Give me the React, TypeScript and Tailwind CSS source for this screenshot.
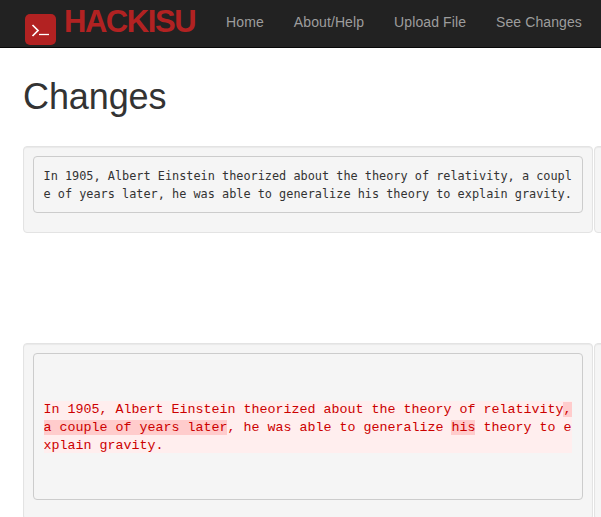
const links = ["Home", "About/Help", "Upload File", "See Changes"];

function Logo() {
  return (
    <svg width="31" height="31" viewBox="0 0 31 31" className="shrink-0" aria-hidden="true">
      <rect x="0" y="0" width="31" height="31" rx="5" fill="#b22222" />
      <path d="M7.5 11 L13 16.5 L7.5 22" fill="none" stroke="#fff" strokeWidth="1.7" />
      <path d="M14 20.5 H24" fill="none" stroke="#fff" strokeWidth="1.3" />
    </svg>
  );
}

function Navbar() {
  return (
    <nav className="flex h-[48px] items-start whitespace-nowrap border-b border-[#080808] bg-[#222222] pl-[25px]">
      <div className="mt-[14px]">
        <Logo />
      </div>
      <span className="ml-[8px] mr-[1px] mt-[4px] text-[31px] font-bold leading-[36px] tracking-[-1.45px] text-[#b22222]">
        HACKISU
      </span>
      <ul className="ml-[15px] flex">
        {links.map((link) => (
          <li key={link} className="px-[15px] pt-[12px] text-[14px] leading-[20px] tracking-[0.1px] text-[#9d9d9d]">
            {link}
          </li>
        ))}
      </ul>
    </nav>
  );
}

function Well({ children }: { children?: React.ReactNode }) {
  return (
    <div className="w-[570px] shrink-0 rounded border border-[#e3e3e3] bg-[#f5f5f5] p-[9px] shadow-[inset_0_1px_1px_rgba(0,0,0,0.05)]">
      {children}
    </div>
  );
}

export default function App() {
  return (
    <div className="h-[517px] overflow-hidden bg-white font-['Liberation_Sans',Arial,sans-serif] text-[#333333]">
      <Navbar />
      <main className="w-max pl-[23px]">
        <h1 className="pt-[29px] text-[36px] font-normal leading-[40px] tracking-[-0.1px]">Changes</h1>

        <div className="mt-[29px] flex gap-px">
          <Well>
            <pre className="mb-[10px] whitespace-pre-wrap break-all rounded border border-[#cccccc] bg-[#f5f5f5] px-[9.5px] pb-[8.36px] pt-[9.5px] font-['DejaVu_Sans_Mono',monospace] text-[11.86px] leading-[18.57px] text-[#333333]">
              In 1905, Albert Einstein theorized about the theory of relativity, a couple of years later, he was able to generalize his theory to explain gravity.
            </pre>
          </Well>
          <Well />
        </div>

        <div className="mt-[110px] flex gap-px">
          <Well>
            <pre className="mb-[10px] rounded border border-[#cccccc] bg-[#f5f5f5] pb-[46px] pl-[9.5px] pr-[10px] pt-[47px]">
              <div className="h-[52px] overflow-x-clip whitespace-pre-wrap break-all bg-[#ffeeee] font-['Liberation_Mono','Courier_New',monospace] text-[13.33px] leading-[18px] text-[#cc0000]">
                {"In 1905, Albert Einstein theorized about the theory of relativity"}
                <span className="bg-[#ffcccc]">{", a couple of years later"}</span>
                {", he was able to generalize "}
                <span className="bg-[#ffcccc]">his</span>
                {" theory to explain gravity."}
              </div>
            </pre>
          </Well>
          <Well />
        </div>
      </main>
    </div>
  );
}
